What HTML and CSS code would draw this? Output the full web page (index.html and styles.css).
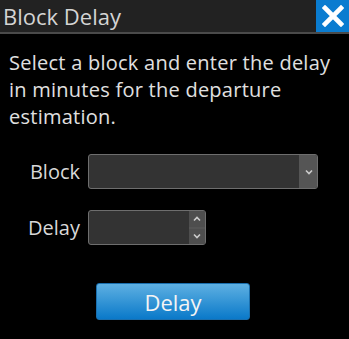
FILE: index.html
```html
<!DOCTYPE html>
<html>
<head>
<meta charset="utf-8">
<link rel="stylesheet" href="styles.css">
</head>
<body>
<div class="dialog">
  <div class="titlebar">
    <div class="title">Block Delay</div>
    <button class="close" aria-label="Close">
      <svg width="22" height="22" viewBox="0 0 22 22"><path d="M3 3 L19 19 M19 3 L3 19" stroke="#fff" stroke-width="4.6" stroke-linecap="square"/></svg>
    </button>
  </div>
  <div class="content">
    <p class="intro">Select a block and enter the delay in minutes for the departure estimation.</p>
    <div class="form">
      <div class="row">
        <label class="label">Block</label>
        <div class="select">
          <div class="select-value"></div>
          <div class="select-arrow">
            <svg width="8" height="6" viewBox="0 0 8 6"><path d="M1 1.5 L4 4.5 L7 1.5" fill="none" stroke="#ccc" stroke-width="1.6"/></svg>
          </div>
        </div>
      </div>
      <div class="row">
        <label class="label">Delay</label>
        <div class="number">
          <div class="number-value"></div>
          <div class="spin">
            <div class="spin-btn"><svg width="8" height="6" viewBox="0 0 8 6"><path d="M1 4.5 L4 1.5 L7 4.5" fill="none" stroke="#ccc" stroke-width="1.6"/></svg></div>
            <div class="spin-btn"><svg width="8" height="6" viewBox="0 0 8 6"><path d="M1 1.5 L4 4.5 L7 1.5" fill="none" stroke="#ccc" stroke-width="1.6"/></svg></div>
          </div>
        </div>
      </div>
    </div>
    <div class="actions">
      <button class="primary">Delay</button>
    </div>
  </div>
</div>
</body>
</html>
```
FILE: styles.css
```css
html, body {
  margin: 0;
  padding: 0;
  background: #000;
}
body {
  width: 349px;
  height: 339px;
  overflow: hidden;
  font-family: "Open Sans", "Noto Sans", sans-serif;
  color: #ddd;
}
.dialog {
  display: flex;
  flex-direction: column;
}
.titlebar {
  display: flex;
  align-items: stretch;
  height: 32px;
  background: #222;
  border-bottom: 2px solid #4a4a4a;
}
.title {
  flex: 1;
  padding-left: 3px;
  font-size: 22px;
  line-height: 32px;
  color: #d4d4d4;
}
.close {
  width: 33px;
  border: 0;
  padding: 0;
  margin: 0;
  background: #0a7cd0;
  display: flex;
  align-items: center;
  justify-content: center;
}
.content {
  padding: 15px 9px 0 9px;
}
.intro {
  margin: 0;
  font-size: 20px;
  line-height: 27px;
  letter-spacing: 0.25px;
  color: #e0e0e0;
}
.form {
  display: flex;
  flex-direction: column;
  gap: 21px;
  margin-top: 24px;
}
.row {
  display: flex;
  align-items: center;
}
.label {
  width: 71px;
  text-align: right;
  padding-right: 8px;
  font-size: 20px;
  color: #d8d8d8;
}
.select, .number {
  display: flex;
  height: 33px;
  border: 1px solid #6e6e6e;
  border-radius: 3px;
  background: #333;
  overflow: hidden;
}
.select { width: 228px; }
.number { width: 116px; }
.select-value, .number-value { flex: 1; }
.select-arrow {
  width: 17px;
  border-left: 1px solid #555;
  background: #555;
  display: flex;
  align-items: center;
  justify-content: center;
}
.spin {
  width: 16px;
  display: flex;
  flex-direction: column;
  background: #555;
  gap: 2px;
}
.spin-btn {
  flex: 1;
  display: flex;
  align-items: center;
  justify-content: center;
  background: #4e4e4e;
}
.actions {
  display: flex;
  padding-left: 87px;
  margin-top: 38px;
}
.primary {
  width: 154px;
  height: 37px;
  border: 1px solid #1a6fae;
  border-radius: 3px;
  background: linear-gradient(#5eb0e2, #0a79c9);
  color: #f4f4f4;
  font-family: "Open Sans", "Noto Sans", sans-serif;
  font-size: 22px;
  padding: 0;
}
```
